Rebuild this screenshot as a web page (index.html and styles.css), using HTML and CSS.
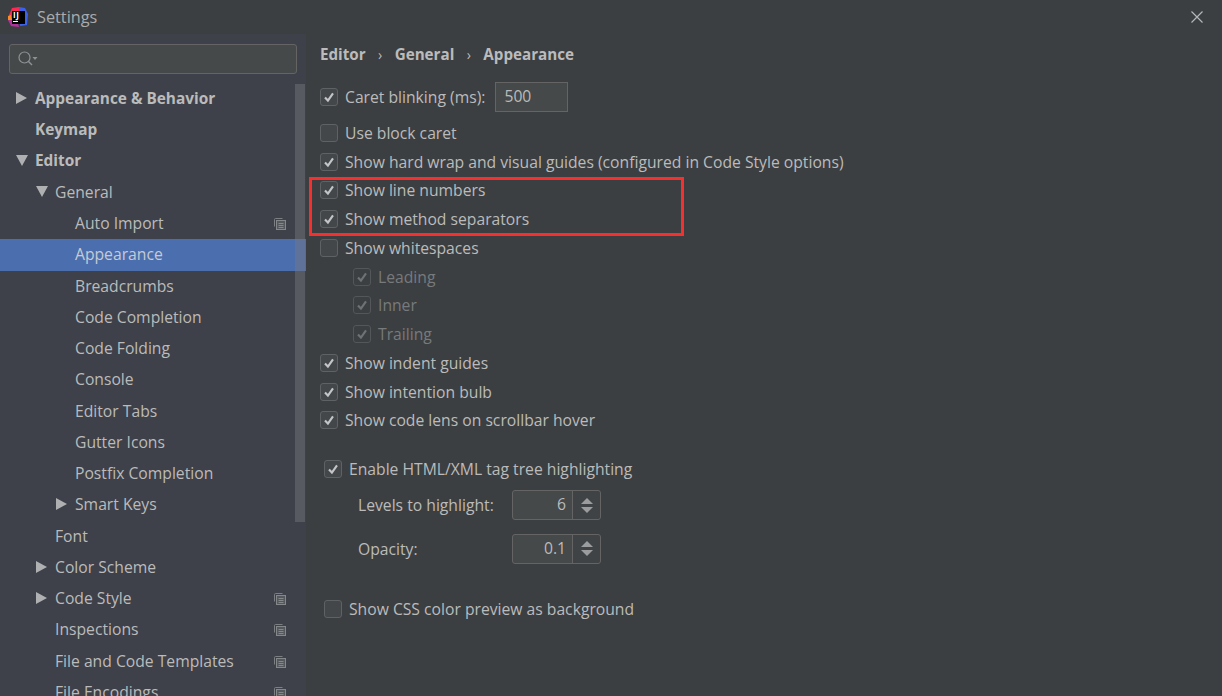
FILE: index.html
```html
<!DOCTYPE html>
<html lang="en">
<head>
    <meta charset="UTF-8">
    <title>Settings</title>
    <link rel="stylesheet" href="styles.css">
</head>
<body>
    <svg class="defs" width="0" height="0">
        <symbol id="check" viewBox="0 0 18 18"><path d="M4.5 9.5 L7.8 13 L13.5 4.8" fill="none" stroke="currentColor" stroke-width="2.4"/></symbol>
        <symbol id="copy" viewBox="0 0 12 12"><path d="M.5 8.5V1.5a1 1 0 0 1 1-1h7" fill="none" stroke="#7d8083"/><rect x="2.5" y="2.5" width="9" height="9" fill="#55585c" stroke="#85888b"/><path d="M4.5 5.5h5M4.5 7.5h5M4.5 9.5h5" stroke="#85888b"/></symbol>
    </svg>

    <header class="titlebar">
        <div class="logo">
            <svg width="20" height="20" viewBox="0 0 20 20">
                <path d="M1 8 L4 1 L11 0 L13 6 L5 13 Z" fill="#fe2857"/>
                <path d="M11 0 L17 1 L20 7 L19 18 L12 19 Z" fill="#3b62e8"/>
                <path d="M1 8 L0 13 L3 19 L11 20 L8 9 Z" fill="#b3309d"/>
                <path d="M0 9 L3 8 L4 13 L0 13 Z" fill="#f98b26"/>
                <rect x="4" y="4" width="13" height="13" fill="#000"/>
                <rect x="5" y="14" width="5" height="1" fill="#fff"/>
            </svg>
            <span class="logo-text">IJ</span>
        </div>
        <span class="window-title">Settings</span>
        <svg class="close" width="14" height="14" viewBox="0 0 14 14"><path d="M1.5 1.5 L12.5 12.5 M12.5 1.5 L1.5 12.5" stroke="#b4b6b8" stroke-width="1.2"/></svg>
    </header>

    <div class="layout">
        <aside class="sidebar">
            <div class="search">
                <svg width="22" height="18" viewBox="0 0 22 18"><circle cx="7.5" cy="7.5" r="5.5" fill="none" stroke="#8f9295" stroke-width="1.2"/><path d="M11.5 11.5 L15 15" stroke="#8f9295" stroke-width="1.4"/><path d="M15.5 7 h5 l-2.5 3z" fill="#8f9295"/></svg>
            </div>
            <div class="tree-wrap">
                <ul class="tree">
                    <li class="node bold"><i class="arrow right lv0"></i>Appearance &amp; Behavior</li>
                    <li class="node bold">Keymap</li>
                    <li class="node bold"><i class="arrow down lv0"></i>Editor</li>
                    <li class="node"><i class="arrow down lv1"></i>General</li>
                    <li class="node lv2">Auto Import<svg class="copy"><use href="#copy"/></svg></li>
                    <li class="node lv2 selected">Appearance</li>
                    <li class="node lv2">Breadcrumbs</li>
                    <li class="node lv2">Code Completion</li>
                    <li class="node lv2">Code Folding</li>
                    <li class="node lv2">Console</li>
                    <li class="node lv2">Editor Tabs</li>
                    <li class="node lv2">Gutter Icons</li>
                    <li class="node lv2">Postfix Completion</li>
                    <li class="node lv2"><i class="arrow right lv2a"></i>Smart Keys</li>
                    <li class="node">Font</li>
                    <li class="node"><i class="arrow right lv1"></i>Color Scheme</li>
                    <li class="node"><i class="arrow right lv1"></i>Code Style<svg class="copy"><use href="#copy"/></svg></li>
                    <li class="node">Inspections<svg class="copy"><use href="#copy"/></svg></li>
                    <li class="node">File and Code Templates<svg class="copy"><use href="#copy"/></svg></li>
                    <li class="node">File Encodings<svg class="copy"><use href="#copy"/></svg></li>
                </ul>
                <div class="scrollbar"></div>
            </div>
        </aside>

        <main class="content">
            <div class="breadcrumb">
                <span>Editor</span><span class="sep">›</span><span>General</span><span class="sep">›</span><span>Appearance</span>
            </div>

            <label class="row caret-row">
                <span class="box"><svg><use href="#check"/></svg></span>Caret blinking (ms):
                <span class="field">500</span>
            </label>
            <label class="row block-caret"><span class="box"></span>Use block caret</label>
            <label class="row"><span class="box"><svg><use href="#check"/></svg></span>Show hard wrap and visual guides (configured in Code Style options)</label>
            <label class="row"><span class="box"><svg><use href="#check"/></svg></span>Show line numbers</label>
            <label class="row"><span class="box"><svg><use href="#check"/></svg></span>Show method separators</label>
            <label class="row"><span class="box"></span>Show whitespaces</label>
            <label class="row sub off"><span class="box"><svg><use href="#check"/></svg></span>Leading</label>
            <label class="row sub off"><span class="box"><svg><use href="#check"/></svg></span>Inner</label>
            <label class="row sub off"><span class="box"><svg><use href="#check"/></svg></span>Trailing</label>
            <label class="row"><span class="box"><svg><use href="#check"/></svg></span>Show indent guides</label>
            <label class="row"><span class="box"><svg><use href="#check"/></svg></span>Show intention bulb</label>
            <label class="row"><span class="box"><svg><use href="#check"/></svg></span>Show code lens on scrollbar hover</label>

            <label class="row indented tag-tree"><span class="box"><svg><use href="#check"/></svg></span>Enable HTML/XML tag tree highlighting</label>
            <div class="spin-row">
                <span class="spin-label">Levels to highlight:</span>
                <div class="spinner"><span class="spin-value">6</span><span class="spin-btns"><i class="up"></i><i class="dn"></i></span></div>
            </div>
            <div class="spin-row">
                <span class="spin-label">Opacity:</span>
                <div class="spinner"><span class="spin-value">0.1</span><span class="spin-btns"><i class="up"></i><i class="dn"></i></span></div>
            </div>
            <label class="row indented css-preview"><span class="box"></span>Show CSS color preview as background</label>

            <div class="redbox"></div>
        </main>
    </div>
</body>
</html>
```

FILE: styles.css
```css
* {
    margin: 0;
    padding: 0;
    box-sizing: border-box;
}

html, body {
    height: 696px;
    overflow: hidden;
}

body {
    background: #3c3f41;
    color: #bbbbbb;
    font-family: 'Open Sans', 'Noto Sans', sans-serif;
    font-size: 15.7px;
}

.defs {
    position: absolute;
}

/* title bar */
.titlebar {
    display: flex;
    align-items: center;
    height: 34px;
    padding: 0 18px 0 8px;
    background: #3c3f41;
}

.logo {
    position: relative;
    width: 20px;
    height: 20px;
    margin-right: 9px;
}

.logo svg {
    display: block;
}

.logo-text {
    position: absolute;
    left: 5px;
    top: 3px;
    font-size: 8px;
    line-height: 10px;
    font-weight: 700;
    letter-spacing: 0.5px;
    color: #fff;
}

.window-title {
    flex: 1;
    font-size: 16.3px;
    color: #a9abad;
}

.layout {
    display: flex;
    height: 662px;
}

/* left tree */
.sidebar {
    width: 306px;
    background: #3e4149;
    padding-top: 10px;
    flex-shrink: 0;
}

.search {
    display: flex;
    align-items: center;
    height: 30px;
    margin: 0 9px;
    padding-left: 7px;
    background: #45494a;
    border: 1px solid #646464;
    border-radius: 3px;
}

.tree-wrap {
    position: relative;
    margin-top: 9px;
}

.tree {
    list-style: none;
}

.node {
    position: relative;
    display: flex;
    align-items: center;
    height: 31.25px;
    padding: 0 0 1px 55px;
    white-space: nowrap;
}

.node.bold {
    padding-left: 35px;
    font-size: 15.4px;
    font-weight: 700;
}

.node.lv2 {
    padding-left: 75px;
}

.selected {
    background: #4b6eaf;
    color: #c6cbd3;
}

.arrow {
    position: absolute;
    width: 0;
    height: 0;
}

.arrow.right {
    border-left: 11px solid #aeb0b2;
    border-top: 6px solid transparent;
    border-bottom: 6px solid transparent;
}

.arrow.down {
    border-top: 11px solid #aeb0b2;
    border-left: 6px solid transparent;
    border-right: 6px solid transparent;
}

.lv0 { left: 16px; }
.lv1 { left: 36px; }
.lv2a { left: 56px; }

.copy {
    position: absolute;
    left: 274px;
    top: 10px;
    width: 12px;
    height: 12px;
}

.scrollbar {
    position: absolute;
    left: 295px;
    top: 1px;
    width: 10px;
    height: 438px;
    background: rgba(120, 122, 128, 0.45);
}

/* right panel */
.content {
    position: relative;
    flex: 1;
    padding: 7px 0 0 14px;
}

.breadcrumb {
    display: flex;
    align-items: center;
    height: 26px;
    font-size: 15.2px;
    font-weight: 700;
    margin-bottom: 14.5px;
}

.sep {
    width: 29px;
    text-align: center;
    font-weight: 400;
    font-size: 14px;
}

.row {
    display: flex;
    align-items: center;
    height: 28.75px;
    white-space: nowrap;
}

.box {
    display: flex;
    width: 18px;
    height: 18px;
    margin-right: 7px;
    background: #43474a;
    border: 1px solid #5f6265;
    border-radius: 3px;
    color: #c3c5c7;
    flex-shrink: 0;
}

.box svg {
    width: 16px;
    height: 16px;
}

.caret-row {
    height: 30px;
}

.field {
    width: 73px;
    height: 30px;
    margin-left: 10px;
    padding-left: 8px;
    line-height: 26px;
    background: #45494a;
    border: 1px solid #646464;
}

.block-caret {
    margin-top: 7px;
}

.sub {
    padding-left: 33px;
}

.off {
    color: #777a7c;
}

.off .box {
    background: #3c3f41;
    border-color: #54575a;
    color: #6f7275;
}

.indented {
    padding-left: 4px;
}

.tag-tree {
    margin-top: 20px;
}

.spin-row {
    display: flex;
    align-items: center;
    height: 30px;
    margin-top: 6.5px;
    padding-left: 38px;
}

.spin-row + .spin-row {
    margin-top: 13.5px;
}

.spin-label {
    width: 154px;
}

.spinner {
    display: flex;
    width: 89px;
    height: 30px;
    background: #45494a;
    border: 1px solid #646464;
    border-radius: 3px;
}

.spin-value {
    flex: 1;
    padding-right: 6px;
    line-height: 26px;
    text-align: right;
}

.spin-btns {
    display: flex;
    flex-direction: column;
    justify-content: center;
    align-items: center;
    gap: 3px;
    width: 28px;
    background: #404345;
    border-left: 1px solid #646464;
    border-radius: 0 3px 3px 0;
}

.up, .dn {
    width: 0;
    height: 0;
    border-left: 6px solid transparent;
    border-right: 6px solid transparent;
}

.up { border-bottom: 6px solid #9a9c9e; }
.dn { border-top: 6px solid #9a9c9e; }

.css-preview {
    margin-top: 31.5px;
}

/* red annotation drawn over the screenshot */
.redbox {
    position: absolute;
    left: 3px;
    top: 143px;
    width: 375px;
    height: 59px;
    border: 3px solid #f4312f;
}
```
